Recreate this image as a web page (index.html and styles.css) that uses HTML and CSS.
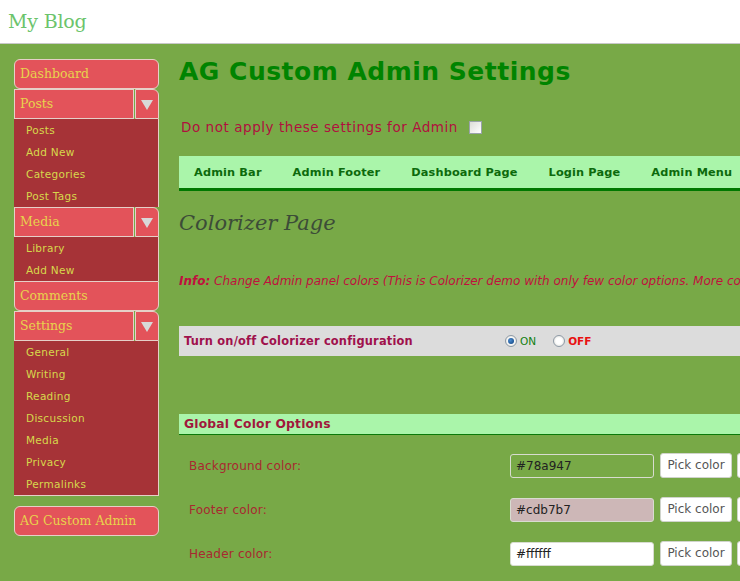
FILE: index.html
```html
<!DOCTYPE html>
<html>
<head>
<meta charset="utf-8">
<title>AG Custom Admin Settings</title>
<link rel="stylesheet" href="styles.css">
</head>
<body>
<header class="topbar">
  <span class="blog-title">My Blog</span>
</header>
<div class="layout">
  <nav class="sidebar">
    <div class="menu-top single">Dashboard</div>
    <div class="menu-group">
      <div class="menu-head"><span class="menu-label">Posts</span><span class="menu-arrow"></span></div>
      <ul class="submenu">
        <li>Posts</li><li>Add New</li><li>Categories</li><li>Post Tags</li>
      </ul>
    </div>
    <div class="menu-group">
      <div class="menu-head"><span class="menu-label">Media</span><span class="menu-arrow"></span></div>
      <ul class="submenu">
        <li>Library</li><li>Add New</li>
      </ul>
    </div>
    <div class="menu-top bottom-round">Comments</div>
    <div class="menu-group">
      <div class="menu-head"><span class="menu-label">Settings</span><span class="menu-arrow"></span></div>
      <ul class="submenu last">
        <li>General</li><li>Writing</li><li>Reading</li><li>Discussion</li><li>Media</li><li>Privacy</li><li>Permalinks</li>
      </ul>
    </div>
    <div class="menu-top single spaced">AG Custom Admin</div>
  </nav>
  <main class="content">
    <h1 class="page-title">AG Custom Admin Settings</h1>
    <div class="admin-opt">
      <span>Do not apply these settings for Admin</span>
      <span class="checkbox"></span>
    </div>
    <div class="tabs">
      <span class="tab">Admin Bar</span>
      <span class="tab">Admin Footer</span>
      <span class="tab">Dashboard Page</span>
      <span class="tab">Login Page</span>
      <span class="tab">Admin Menu</span>
    </div>
    <h2 class="section-title">Colorizer Page</h2>
    <p class="info"><b>Info:</b> Change Admin panel colors (This is Colorizer demo with only few color options. More color options in full version)</p>
    <div class="toggle-bar">
      <span class="toggle-label">Turn on/off Colorizer configuration</span>
      <span class="radio checked"></span><span class="on">ON</span>
      <span class="radio"></span><span class="off">OFF</span>
    </div>
    <div class="group-bar">Global Color Options</div>
    <div class="color-rows">
      <div class="color-row">
        <span class="color-label">Background color:</span>
        <span class="color-input c-bg">#78a947</span>
        <span class="pick">Pick color</span>
        <span class="pick">Pick color</span>
      </div>
      <div class="color-row">
        <span class="color-label">Footer color:</span>
        <span class="color-input c-footer">#cdb7b7</span>
        <span class="pick">Pick color</span>
        <span class="pick">Pick color</span>
      </div>
      <div class="color-row">
        <span class="color-label">Header color:</span>
        <span class="color-input c-header">#ffffff</span>
        <span class="pick">Pick color</span>
        <span class="pick">Pick color</span>
      </div>
    </div>
  </main>
</div>
</body>
</html>
```
FILE: styles.css
```css
html, body {
  margin: 0;
  padding: 0;
  overflow: hidden;
}
body {
  background: #78a947;
  font-family: "DejaVu Sans", Verdana, sans-serif;
  width: 740px;
  height: 581px;
}
.topbar {
  height: 44px;
  background: #ffffff;
  border-bottom: 1px solid #c8c8c8;
  display: flex;
  align-items: center;
  padding-left: 8px;
  box-sizing: border-box;
}
.blog-title {
  font-family: "DejaVu Serif", Georgia, serif;
  font-size: 19px;
  color: #6cc46c;
  margin-top: -1px;
  letter-spacing: -0.2px;
}
.layout {
  display: flex;
  align-items: flex-start;
  padding-top: 15px;
}
.sidebar {
  width: 145px;
  margin-left: 14px;
  flex: none;
  display: flex;
  flex-direction: column;
}
.menu-top, .menu-label {
  font-family: "DejaVu Serif", Georgia, serif;
  font-size: 12.5px;
  color: #e8d24c;
  background: #e3535a;
  border: 1px solid #e6d0c8;
  height: 28px;
  line-height: 28px;
  padding-left: 5px;
}
.menu-top.single {
  border-radius: 6px;
}
.menu-top.bottom-round {
  border-radius: 0 0 6px 6px;
}
.menu-top.spaced {
  margin-top: 10px;
}
.menu-head {
  display: flex;
  gap: 1px;
}
.menu-label {
  flex: 1;
}
.menu-arrow {
  width: 22px;
  height: 28px;
  background: #e3535a;
  border: 1px solid #e6d0c8;
  border-radius: 0 6px 0 0;
  position: relative;
}
.menu-arrow::after {
  content: "";
  position: absolute;
  left: 5px;
  top: 10px;
  border-left: 6px solid transparent;
  border-right: 6px solid transparent;
  border-top: 10px solid #d8d8d8;
}
.submenu {
  list-style: none;
  margin: 0;
  padding: 0;
  background: #a63337;
  border-right: 1px solid #e6d0c8;
}
.submenu.last {
  border-bottom: 1px solid #e6d0c8;
}
.submenu li {
  height: 22px;
  line-height: 22px;
  padding-left: 12px;
  font-size: 10.5px;
  color: #d6d84c;
  letter-spacing: 0.3px;
}
.content {
  flex: none;
  width: 600px;
  margin-left: 20px;
}
.page-title {
  margin: -2px 0 0 0;
  font-size: 25px;
  font-weight: bold;
  color: #008400;
  height: 30px;
  line-height: 30px;
  letter-spacing: 0.5px;
  white-space: nowrap;
}
.admin-opt {
  margin-top: 30px;
  padding-left: 2px;
  display: flex;
  align-items: center;
  gap: 11px;
  font-size: 13.5px;
  letter-spacing: 0.55px;
  color: #b0103e;
  height: 20px;
}
.checkbox {
  width: 11px;
  height: 11px;
  border: 1px solid #9aa2aa;
  background: linear-gradient(135deg, #dcdcd6, #ffffff);
}
.tabs {
  margin-top: 19px;
  height: 32px;
  background: #aaf5aa;
  border-bottom: 3px solid #007800;
  display: flex;
  align-items: center;
  padding-left: 15px;
  gap: 31px;
  white-space: nowrap;
}
.tab {
  font-size: 11.3px;
  font-weight: bold;
  color: #0c6a0c;
  letter-spacing: 0.15px;
  flex: none;
}
.section-title {
  margin: 18px 0 0 0;
  font-family: "DejaVu Serif", Georgia, serif;
  font-style: italic;
  font-weight: normal;
  font-size: 21px;
  color: #3c4c38;
  height: 28px;
  line-height: 28px;
}
.info {
  margin: 36px 0 0 0;
  font-size: 12px;
  font-style: italic;
  color: #c0103e;
  white-space: nowrap;
  height: 16px;
  line-height: 16px;
}
.info b {
  font-weight: bold;
}
.toggle-bar {
  margin-top: 37px;
  height: 30px;
  background: #dcdcdc;
  display: flex;
  align-items: center;
  padding-left: 5px;
}
.toggle-label {
  font-size: 11.4px;
  font-weight: bold;
  color: #a0104c;
  width: 321px;
  flex: none;
  letter-spacing: 0.2px;
}
.radio {
  width: 10px;
  height: 10px;
  border-radius: 50%;
  border: 1px solid #8e9aa6;
  background: radial-gradient(circle, #ffffff 40%, #d6d6d0 100%);
  position: relative;
  margin-right: 3px;
  flex: none;
}
.radio.checked::after {
  content: "";
  position: absolute;
  left: 2px;
  top: 2px;
  width: 6px;
  height: 6px;
  border-radius: 50%;
  background: radial-gradient(circle at 40% 40%, #4a8cd0, #0c3c78);
}
.on {
  font-size: 10.5px;
  color: #108010;
  margin-right: 17px;
}
.off {
  font-size: 10.5px;
  font-weight: bold;
  color: #e81010;
}
.group-bar {
  margin-top: 58px;
  height: 20px;
  line-height: 20px;
  background: #aaf5aa;
  border-bottom: 1px solid #0a7a0a;
  padding-left: 5px;
  font-size: 12.3px;
  font-weight: bold;
  color: #a0183c;
  letter-spacing: 0.2px;
}
.color-rows {
  display: flex;
  flex-direction: column;
  gap: 19px;
  margin-top: 18px;
}
.color-row {
  display: flex;
  align-items: center;
  height: 25px;
  padding-left: 10px;
}
.color-label {
  width: 321px;
  flex: none;
  font-size: 12px;
  color: #a82830;
  letter-spacing: 0.2px;
}
.color-input {
  width: 137px;
  height: 22px;
  line-height: 22px;
  border: 1px solid #d8dcd0;
  border-radius: 3px;
  padding-left: 5px;
  font-size: 12px;
  color: #222222;
  margin-right: 6px;
  flex: none;
}
.c-bg { background: #78a947; }
.c-footer { background: #cdb7b7; }
.c-header { background: #ffffff; }
.pick {
  width: 70px;
  height: 23px;
  line-height: 23px;
  background: #ffffff;
  border: 1px solid #d0d4cc;
  border-radius: 3px;
  text-align: center;
  font-family: "DejaVu Sans", Tahoma, sans-serif;
  font-size: 12px;
  color: #555555;
  margin-right: 5px;
  flex: none;
  white-space: nowrap;
}
```
